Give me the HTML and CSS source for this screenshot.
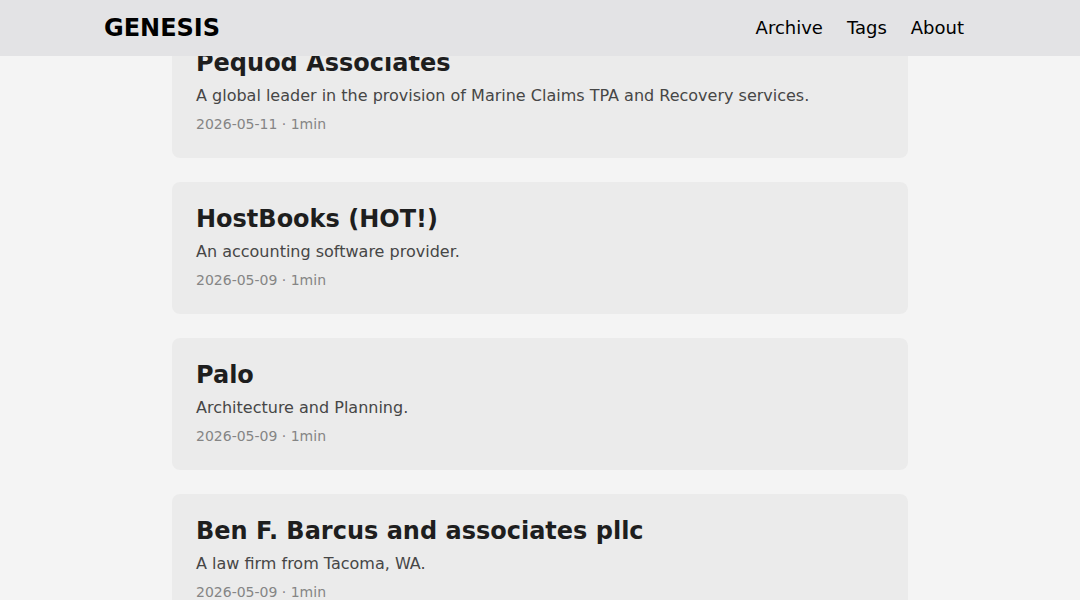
FILE: index.html
```html
<!DOCTYPE html>
<html lang="en">
<head>
<meta charset="utf-8">
<title>GENESIS</title>
<link rel="stylesheet" href="styles.css">
</head>
<body>
<header class="header">
  <nav class="nav">
    <a class="logo" href="#">GENESIS</a>
    <ul class="menu">
      <li><a href="#">Archive</a></li>
      <li><a href="#">Tags</a></li>
      <li><a href="#">About</a></li>
    </ul>
  </nav>
</header>
<main class="main">
  <article class="entry">
    <h2 class="entry-title">Pequod Associates</h2>
    <p class="entry-content">A global leader in the provision of Marine Claims TPA and Recovery services.</p>
    <footer class="entry-footer">2026-05-11 · 1min</footer>
  </article>
  <article class="entry">
    <h2 class="entry-title">HostBooks (HOT!)</h2>
    <p class="entry-content">An accounting software provider.</p>
    <footer class="entry-footer">2026-05-09 · 1min</footer>
  </article>
  <article class="entry">
    <h2 class="entry-title">Palo</h2>
    <p class="entry-content">Architecture and Planning.</p>
    <footer class="entry-footer">2026-05-09 · 1min</footer>
  </article>
  <article class="entry">
    <h2 class="entry-title">Ben F. Barcus and associates pllc</h2>
    <p class="entry-content">A law firm from Tacoma, WA.</p>
    <footer class="entry-footer">2026-05-09 · 1min</footer>
  </article>
</main>
</body>
</html>
```
FILE: styles.css
```css
* { box-sizing: border-box; }
html, body { margin: 0; padding: 0; }
body {
  background: #f4f4f4;
  font-family: "DejaVu Sans", "Liberation Sans", sans-serif;
  color: #1e1e1e;
}
a { color: inherit; text-decoration: none; }

.header {
  position: fixed;
  top: 0;
  left: 0;
  right: 0;
  height: 56px;
  background: #e3e3e5;
  z-index: 10;
}
.nav {
  width: 872px;
  margin: 0 auto;
  padding-right: 12px;
  height: 56px;
  display: flex;
  justify-content: space-between;
  align-items: center;
}
.logo {
  font-size: 24px;
  font-weight: 700;
  line-height: 56px;
  color: #000;
}
.menu {
  list-style: none;
  margin: 0;
  padding: 0;
  display: flex;
  gap: 24px;
}
.menu a {
  font-size: 18px;
  line-height: 56px;
  color: #000;
}

.main {
  width: 736px;
  margin: 0 auto;
  padding-top: 26px;
  display: flex;
  flex-direction: column;
  gap: 24px;
}
.entry {
  background: #ebebeb;
  border-radius: 8px;
  padding: 23px 24px 24px;
}
.entry-title {
  margin: 0;
  font-size: 24px;
  line-height: 28px;
  font-weight: 700;
  color: #1e1e1e;
}
.entry-content {
  margin: 7px 0 0;
  font-size: 16px;
  line-height: 24px;
  color: #464646;
}
.entry-footer {
  margin-top: 6px;
  font-size: 14px;
  line-height: 20px;
  color: #858585;
}
```
